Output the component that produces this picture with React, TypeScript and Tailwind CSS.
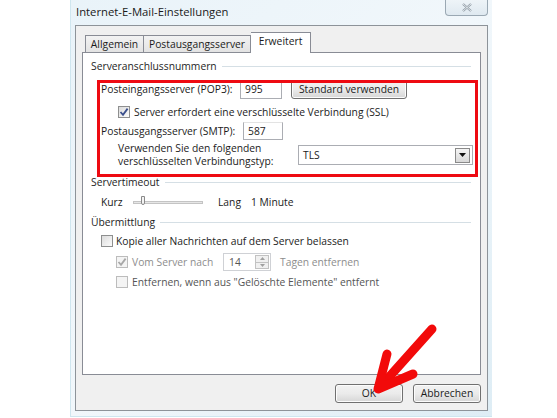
import React from "react";

const font = { fontFamily: '"Open Sans", "Noto Sans", sans-serif' };

function Check({ checked = false, disabled = false }: { checked?: boolean; disabled?: boolean }) {
  return (
    <div
      className={`w-[12px] h-[12px] border flex items-center justify-center shrink-0 ${
        disabled ? "border-[#bcbcbc] bg-[#f4f4f4]" : "border-[#8e8f8f] bg-gradient-to-br from-[#dcdcdc] to-[#fbfbfb]"
      }`}
    >
      {checked && (
        <svg width="10" height="10" viewBox="0 0 10 10">
          <path
            d="M1.5 5 L4 7.8 L8.6 1.6"
            fill="none"
            stroke={disabled ? "#a8a8a8" : "#3b4f8c"}
            strokeWidth="1.8"
          />
        </svg>
      )}
    </div>
  );
}

function GroupHeader({ text }: { text: string }) {
  return (
    <div className="flex items-center h-[16px] pr-[9px]">
      <span className="text-[#1e1e1e] whitespace-nowrap">{text}</span>
      <div className="flex-1 h-px bg-[#d5dfe5] ml-[5px]" />
    </div>
  );
}

function Button({ text, w }: { text: string; w: string }) {
  return (
    <div
      className={`${w} h-[19px] rounded-[3px] border border-[#707070] bg-gradient-to-b from-[#f2f2f2] via-[#ebebeb] to-[#d6d6d6] flex items-center justify-center text-[#1b1b1b] shadow-[inset_0_0_0_1px_#fcfcfc]`}
    >
      {text}
    </div>
  );
}

export default function App() {
  return (
    <div className="w-[557px] h-[418px] bg-white overflow-hidden relative text-[10.3px] leading-none" style={font}>
      <div className="ml-[70px] w-[422px] h-[417px] bg-gradient-to-br from-[#e9f3f9] via-[#f1f7fb] to-[#deedf5] border-l border-b border-[#cfe6ef] flex flex-col">
        {/* Title bar */}
        <div className="h-[25px] flex items-start justify-between">
          <div className="pl-[5px] pt-[6px] text-[11.3px] text-[#1a1a1a]">Internet-E-Mail-Einstellungen</div>
          <div className="mr-[4px] w-[43px] h-[16px] border border-t-0 border-[#9aa8b3] rounded-b-[4px] bg-gradient-to-b from-[#eef4f8] to-[#dfe9f0] flex items-center justify-center">
            <svg width="12" height="9" viewBox="0 0 12 9">
              <path d="M2 1 L10 8 M10 1 L2 8" stroke="#8e9aa4" strokeWidth="2.2" />
              <path d="M2 1 L10 8 M10 1 L2 8" stroke="#f4f7f9" strokeWidth="0.8" />
            </svg>
          </div>
        </div>
        {/* Client area */}
        <div className="ml-[4px] w-[413px] h-[386px] border border-[#8d9399] bg-[#f0f0f0] flex flex-col">
          {/* Tabs */}
          <div className="mt-[6px] ml-[9px] h-[20px] flex items-end relative z-10">
            <div className="w-[59px] h-[17px] border border-b-0 border-[#898c95] bg-gradient-to-b from-[#f3f3f3] to-[#e3e3e3] flex items-center justify-center text-[#1b1b1b]">
              Allgemein
            </div>
            <div className="w-[107px] h-[17px] border border-b-0 border-l-0 border-[#898c95] bg-gradient-to-b from-[#f3f3f3] to-[#e3e3e3] flex items-center justify-center text-[#1b1b1b]">
              Postausgangsserver
            </div>
            <div className="w-[60px] h-[21px] -mb-px border border-b-0 border-l-0 border-[#898c95] bg-white flex items-center justify-center text-[#1b1b1b] pb-[3px]">
              Erweitert
            </div>
          </div>
          {/* Panel */}
          <div className="ml-[6px] w-[399px] h-[323px] border border-[#898c95] bg-white pl-[8px] flex flex-col text-[#1b1b1b]">
            <div className="mt-[5px]">
              <GroupHeader text="Serveranschlussnummern" />
            </div>
            {/* row1 */}
            <div className="mt-[6px] h-[19px] flex items-center pl-[10px]">
              <div className="w-[139px]">Posteingangsserver (POP3):</div>
              <div className="w-[42px] h-[18px] border border-[#abadb3] border-t-[#e3e3e3] bg-white flex items-center pl-[4px]">995</div>
              <div className="ml-[9px]">
                <Button text="Standard verwenden" w="w-[116px]" />
              </div>
            </div>
            {/* row2 */}
            <div className="mt-[6px] h-[14px] flex items-center pl-[27px]">
              <Check checked />
              <span className="ml-[4px]">Server erfordert eine verschlüsselte Verbindung (SSL)</span>
            </div>
            {/* row3 */}
            <div className="mt-[3px] h-[18px] flex items-center pl-[10px]">
              <div className="w-[142px]">Postausgangsserver (SMTP):</div>
              <div className="w-[40px] h-[18px] border border-[#abadb3] border-t-[#e3e3e3] bg-white flex items-center pl-[4px]">587</div>
            </div>
            {/* row4 */}
            <div className="mt-[2px] h-[26px] flex items-center pl-[27px]">
              <div className="w-[180px] flex flex-col leading-[13px]">
                <span>Verwenden Sie den folgenden</span>
                <span>verschlüsselten Verbindungstyp:</span>
              </div>
              <div className="w-[175px] h-[20px] border border-[#abadb3] bg-white flex items-center justify-between pl-[4px] pr-[2px]">
                <span>TLS</span>
                <div className="w-[15px] h-[15px] border border-[#8a8a8a] bg-gradient-to-b from-[#f5f5f5] to-[#d8d8d8] flex items-center justify-center">
                  <svg width="7" height="4" viewBox="0 0 7 4">
                    <path d="M0 0 L7 0 L3.5 4 Z" fill="#111" />
                  </svg>
                </div>
              </div>
            </div>
            <div className="mt-[6px]">
              <GroupHeader text="Servertimeout" />
            </div>
            {/* slider row */}
            <div className="mt-[4px] h-[16px] flex items-center pl-[10px]">
              <span className="w-[32px]">Kurz</span>
              <div className="w-[70px] h-[10px] relative flex items-center">
                <div className="w-full h-[3px] border border-[#c4c4c4] bg-[#e6e6e6]" />
                <div className="absolute left-[8px] top-[-1px] w-[4px] h-[9px] border border-[#8a8a8a] rounded-b-[2px] bg-[#f4f4f4]" />
              </div>
              <span className="ml-[15px]">Lang</span>
              <span className="ml-[10px]">1 Minute</span>
            </div>
            <div className="mt-[4px]">
              <GroupHeader text="Übermittlung" />
            </div>
            {/* Kopie */}
            <div className="mt-[4px] h-[14px] flex items-center pl-[10px]">
              <Check />
              <span className="ml-[3px]">Kopie aller Nachrichten auf dem Server belassen</span>
            </div>
            {/* Vom */}
            <div className="mt-[5px] h-[18px] flex items-center pl-[25px] text-[#8d8d8d]">
              <Check checked disabled />
              <span className="ml-[4px] w-[91px]">Vom Server nach</span>
              <div className="w-[48px] h-[18px] border border-[#cfd1d5] bg-white flex items-center justify-between pl-[5px] pr-[1px]">
                <span className="text-[#555]">14</span>
                <div className="w-[14px] h-[14px] flex flex-col border border-[#c2c2c2]">
                  <div className="flex-1 bg-[#f0f0f0] border-b border-[#c2c2c2] flex items-center justify-center">
                    <svg width="5" height="3" viewBox="0 0 5 3"><path d="M0 3 L5 3 L2.5 0 Z" fill="#a0a0a0" /></svg>
                  </div>
                  <div className="flex-1 bg-[#f0f0f0] flex items-center justify-center">
                    <svg width="5" height="3" viewBox="0 0 5 3"><path d="M0 0 L5 0 L2.5 3 Z" fill="#a0a0a0" /></svg>
                  </div>
                </div>
              </div>
              <span className="ml-[9px]">Tagen entfernen</span>
            </div>
            {/* Entfernen */}
            <div className="mt-[4px] h-[14px] flex items-center pl-[25px] text-[#1b1b1b]">
              <Check disabled />
              <span className="ml-[4px] text-[#555]">Entfernen, wenn aus "Gelöschte Elemente" entfernt</span>
            </div>
          </div>
          {/* Buttons */}
          <div className="mt-[9px] flex justify-end pr-[6px] gap-[10px]">
            <Button text="OK" w="w-[68px]" />
            <Button text="Abbrechen" w="w-[68px]" />
          </div>
        </div>
      </div>
      {/* Red annotation box */}
      <div className="absolute left-[97px] top-[80px] w-[381px] h-[97px] border-[3px] border-[#ee0a12] pointer-events-none" />
      {/* Red arrow */}
      <svg className="absolute left-0 top-0 pointer-events-none" width="557" height="418" viewBox="0 0 557 418">
        <g stroke="#f20a0a" strokeWidth="9" strokeLinecap="round" strokeLinejoin="round" fill="none">
          <path d="M432 329 L381 386" />
          <path d="M387 354 L378 389 L413 374" />
        </g>
      </svg>
    </div>
  );
}
